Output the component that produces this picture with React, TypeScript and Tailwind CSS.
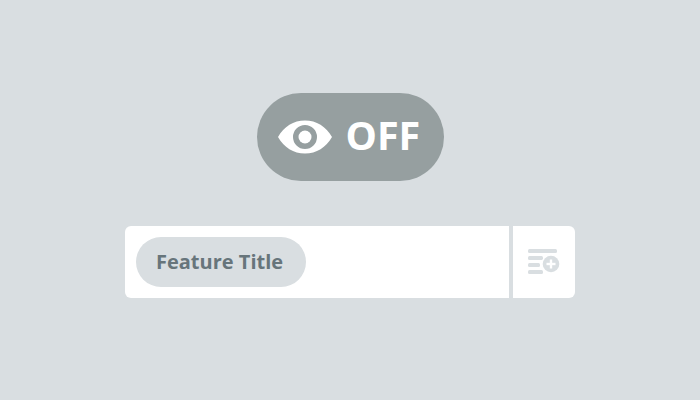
export default function App() {
  return (
    <div className="w-[700px] h-[400px] bg-[#d9dee1] flex flex-col items-center font-['Open_Sans',sans-serif]">
      {/* Toggle pill */}
      <div className="mt-[93px] w-[187px] h-[88px] rounded-[44px] bg-[#969fa0] flex items-center pl-[21px] text-white">
        <svg width="54" height="36" viewBox="0 0 54 36">
          <path
            fillRule="evenodd"
            fill="#ffffff"
            d="M0 18C6 7.5 15.5 1.5 27 1.5S48 7.5 54 18C48 28.5 38.500 34.500 27 34.500S6 28.500 0 18ZM27 6A12 12 0 1 0 27 30A12 12 0 1 0 27 6Z"
          />
          <path
            fillRule="evenodd"
            fill="#ffffff"
            d="M27 11.500A6.500 6.500 0 1 1 27 24.500A6.500 6.500 0 1 1 27 11.500Z"
          />
        </svg>
        <span className="ml-[14px] pb-[3px] text-[39.5px] leading-none font-bold">OFF</span>
      </div>

      {/* Feature row */}
      <div className="mt-[45px] w-[450px] h-[72px] bg-white rounded-[6px] flex items-stretch">
        <div className="flex-1 flex items-center pl-[11px]">
          <div className="w-[170px] h-[50px] rounded-[25px] bg-[#d9dee1] flex items-center pl-[20px] text-[#67757b] text-[20px] font-bold">
            Feature Title
          </div>
        </div>
        <div className="w-[4px] bg-[#d9dee1]" />
        <div className="w-[62px] flex items-center pl-[15px]">
          <svg width="32" height="26" viewBox="0 0 32 26">
            <rect x="0" y="0" width="29" height="4" rx="1.500" fill="#d9dee1" />
            <rect x="0" y="7" width="15" height="4" rx="1.500" fill="#d9dee1" />
            <rect x="0" y="14" width="12" height="4" rx="1.500" fill="#d9dee1" />
            <rect x="0" y="21" width="15" height="4" rx="1.500" fill="#d9dee1" />
            <circle cx="23" cy="15" r="9.500" fill="#ffffff" />
            <circle cx="23" cy="15" r="8.300" fill="#d9dee1" />
            <rect x="21.800" y="10.500" width="2.400" height="9" fill="#ffffff" />
            <rect x="18.500" y="13.800" width="9" height="2.400" fill="#ffffff" />
          </svg>
        </div>
      </div>
    </div>
  );
}
